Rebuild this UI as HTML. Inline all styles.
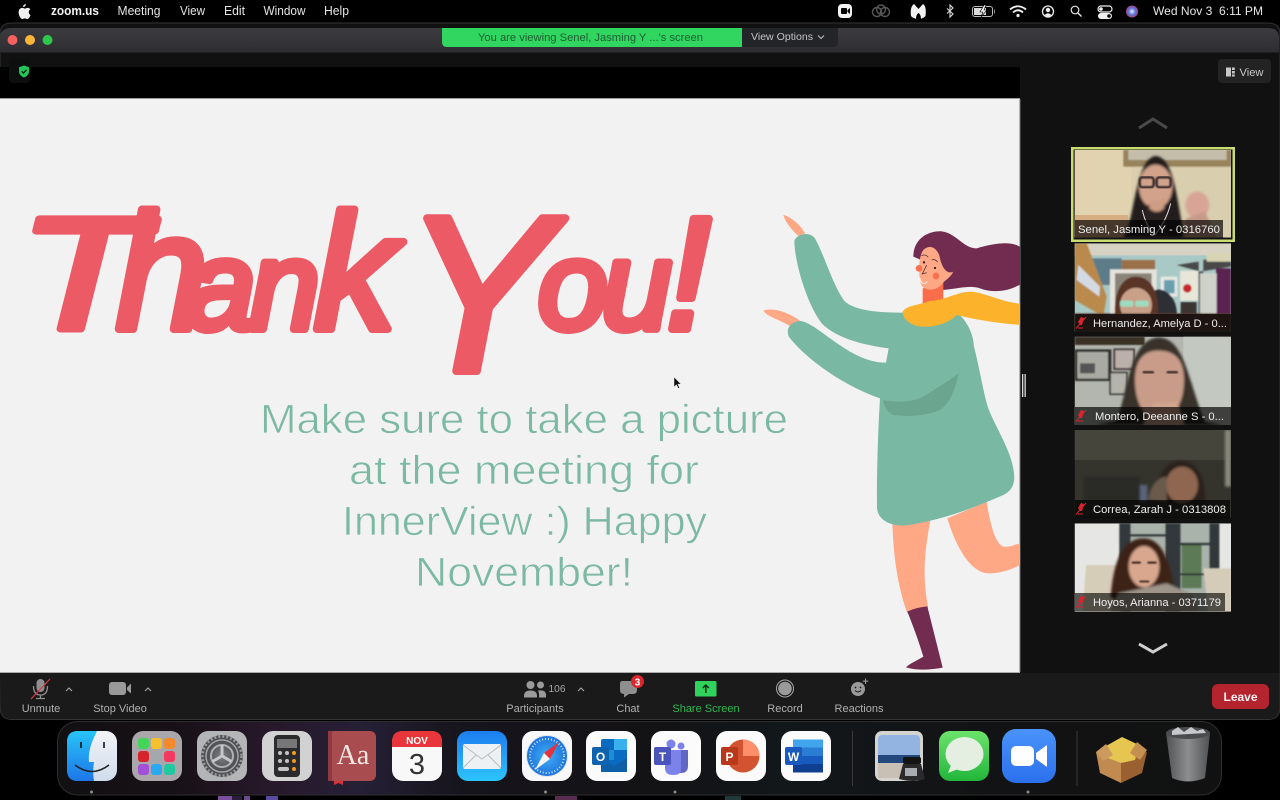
<!DOCTYPE html>
<html><head><meta charset="utf-8"><title>Zoom</title>
<style>
html,body{margin:0;padding:0;width:1280px;height:800px;overflow:hidden;background:#000}
svg{display:block;position:absolute;left:0;top:0}
text{font-family:"Liberation Sans",sans-serif}
.scr{font-style:italic;fill:#ec5a65;stroke:#ec5a65;stroke-linejoin:round;stroke-linecap:round}
</style></head><body>
<svg width="1280" height="800" viewBox="0 0 1280 800" xmlns="http://www.w3.org/2000/svg">
<defs>
<filter id="b1" x="-10%" y="-10%" width="120%" height="120%"><feGaussianBlur stdDeviation="4"/></filter>
<filter id="b2" x="-10%" y="-10%" width="120%" height="120%"><feGaussianBlur stdDeviation="2"/></filter>
<linearGradient id="title" x1="0" y1="0" x2="0" y2="1"><stop offset="0" stop-color="#3c3b3f"/><stop offset="1" stop-color="#2e2d31"/></linearGradient>
<linearGradient id="dockbg" x1="0" x2="1" y1="0" y2="0">
<stop offset="0" stop-color="#111012"/><stop offset=".1" stop-color="#171116"/><stop offset=".18" stop-color="#27182a"/><stop offset=".26" stop-color="#262036"/><stop offset=".34" stop-color="#17151d"/><stop offset=".5" stop-color="#131214"/><stop offset=".62" stop-color="#12171a"/><stop offset=".8" stop-color="#121314"/><stop offset="1" stop-color="#111112"/></linearGradient>
<linearGradient id="finderL" x1="0" y1="0" x2="0" y2="1"><stop offset="0" stop-color="#27c4f8"/><stop offset="1" stop-color="#1d76e8"/></linearGradient>
<linearGradient id="finderR" x1="0" y1="0" x2="0" y2="1"><stop offset="0" stop-color="#f4f4f6"/><stop offset="1" stop-color="#cfdcec"/></linearGradient>
<linearGradient id="mailb" x1="0" y1="0" x2="0" y2="1"><stop offset="0" stop-color="#1d7df0"/><stop offset="1" stop-color="#2cc4fb"/></linearGradient>
<linearGradient id="msg" x1="0" y1="0" x2="0" y2="1"><stop offset="0" stop-color="#6ce36b"/><stop offset="1" stop-color="#22b63c"/></linearGradient>
<linearGradient id="zoomi" x1="0" y1="0" x2="0" y2="1"><stop offset="0" stop-color="#4a93fb"/><stop offset="1" stop-color="#2b70ec"/></linearGradient>
<linearGradient id="trash" x1="0" y1="0" x2="1" y2="0"><stop offset="0" stop-color="#505254"/><stop offset=".5" stop-color="#8c8e90"/><stop offset="1" stop-color="#4e5052"/></linearGradient>
<radialGradient id="siri" cx=".5" cy=".5" r=".5"><stop offset="0" stop-color="#e8f2ff"/><stop offset=".6" stop-color="#5a6fd8"/><stop offset="1" stop-color="#b0467c"/></radialGradient>
<radialGradient id="safari" cx=".5" cy=".5" r=".5"><stop offset="0" stop-color="#3fb0f5"/><stop offset="1" stop-color="#1d72dc"/></radialGradient>
<radialGradient id="gear" cx=".5" cy=".5" r=".5"><stop offset="0" stop-color="#7d7f82"/><stop offset="1" stop-color="#494b4e"/></radialGradient>
<clipPath id="c1"><rect x="44" y="30" width="469" height="263"/></clipPath>
<clipPath id="c2"><rect x="44" y="310" width="469" height="265"/></clipPath>
<clipPath id="c3"><rect x="44" y="590" width="469" height="265"/></clipPath>
<clipPath id="c4"><rect x="44" y="30" width="469" height="263"/></clipPath>
<clipPath id="c5"><rect x="44" y="310" width="469" height="265"/></clipPath>
<clipPath id="slide"><rect x="0" y="99" width="1020" height="573"/></clipPath>
</defs>

<rect width="1280" height="800" fill="#000"/>

<!-- wallpaper bits -->
<rect x="218" y="796" width="14" height="4" fill="#7a4fa0"/><rect x="232" y="796" width="10" height="4" fill="#2a1f3a"/><rect x="244" y="796" width="6" height="4" fill="#6a4a90"/><rect x="266" y="796" width="12" height="4" fill="#5b4aa0"/>
<rect x="555" y="796" width="22" height="4" fill="#5a2c50"/><rect x="725" y="796" width="16" height="4" fill="#22383c"/>

<!-- Window -->
<path d="M0 34 Q0 23 12 23 L1268 23 Q1280 23 1280 34 L1280 707 Q1280 719.500 1268 719.500 L12 719.500 Q0 719.500 0 707Z" fill="#111112" stroke="#333" stroke-width="1"/>
<path d="M0 38 Q0 28 12 28 L1268 28 Q1279 28 1279 38 L1279 52 L0 52Z" fill="url(#title)"/>
<rect x="0" y="52" width="1280" height="1" fill="#1e1e1f"/>
<circle cx="12.500" cy="40" r="5" fill="#f4605c"/><circle cx="30" cy="40" r="5" fill="#fbb63a"/><circle cx="47.500" cy="40" r="5" fill="#2fc74a"/>

<!-- Banner -->
<path d="M442 28 H742 V47 H447 Q442 47 442 42Z" fill="#30d65f"/>
<text x="478" y="41" font-size="11" fill="#1f5c33" textLength="225" lengthAdjust="spacingAndGlyphs">You are viewing Senel, Jasming Y ...'s screen</text>
<path d="M742 28 H838 V42 Q838 47 833 47 H742Z" fill="#242529"/>
<text x="751" y="40" font-size="10" fill="#c4c4c4" textLength="62" lengthAdjust="spacingAndGlyphs">View Options</text>
<path d="M818 35.500 l3 3 l3 -3" fill="none" stroke="#c4c4c4" stroke-width="1"/>

<!-- Menu bar -->
<path d="M25.700 4 C24.200 4.200 23 5.400 23.100 7 C24.600 7 26 5.700 25.700 4Z M28.800 11.800 C28.800 10.400 29.900 9.600 30.400 9.300 C29.600 8.100 28.200 7.900 27.700 7.900 C26.600 7.800 25.500 8.600 24.900 8.600 C24.300 8.600 23.400 7.900 22.400 7.900 C21.100 7.900 19.800 8.700 19.200 9.800 C17.900 12 18.900 15.400 20.100 17.200 C20.700 18.100 21.500 19 22.400 19 C23.300 19 23.700 18.400 24.800 18.400 C25.900 18.400 26.200 19 27.200 19 C28.200 19 28.900 18.100 29.500 17.200 C30.200 16.200 30.500 15.200 30.500 15.100 C30.500 15.100 28.800 14.400 28.800 11.800Z" fill="#f0f0f0"/>
<g fill="#e4e4e4" font-size="12.500">
<text x="51" y="15" font-weight="bold" fill="#f2f2f2" textLength="48" lengthAdjust="spacingAndGlyphs">zoom.us</text>
<text x="117.500" y="15" textLength="43" lengthAdjust="spacingAndGlyphs">Meeting</text>
<text x="180" y="15" textLength="25" lengthAdjust="spacingAndGlyphs">View</text>
<text x="224" y="15" textLength="21" lengthAdjust="spacingAndGlyphs">Edit</text>
<text x="263.500" y="15" textLength="42" lengthAdjust="spacingAndGlyphs">Window</text>
<text x="324" y="15" textLength="25" lengthAdjust="spacingAndGlyphs">Help</text>
<text x="1153" y="15" font-size="12" textLength="110" lengthAdjust="spacingAndGlyphs" xml:space="preserve">Wed Nov 3  6:11 PM</text>
</g>
<!-- status icons -->
<rect x="838" y="4" width="14" height="14" rx="4" fill="#f2f2f2"/><rect x="841" y="8" width="6" height="6" rx="1" fill="#000"/><path d="M847.500 10 l2.500 -2 v6 l-2.500 -2z" fill="#000"/>
<g fill="none" stroke="#555" stroke-width="1.500"><circle cx="877" cy="12" r="4.500"/><circle cx="885" cy="12" r="4.500"/><circle cx="881" cy="9.500" r="4.500"/></g>
<path d="M911 16 C910 9 912 5 914 4 L918.500 9 L923 4 C925 5 926.500 9 925.500 16 C924 18 922 18 921 19 C921 16 920 14 918.500 13 C917 14 916 16 916 19 C914.500 18 912.500 18 911 16Z" fill="#f2f2f2"/>
<path d="M947 8.500 L953 14 L950 17 V5 L953 8 L947 13.500" fill="none" stroke="#dcdcdc" stroke-width="1.100"/>
<rect x="972.500" y="6.500" width="20" height="10" rx="2.500" fill="none" stroke="#bdbdbd"/><rect x="974" y="8" width="12" height="7" fill="#dcdcdc"/><path d="M984 5 l-4 7 h3 l-2 5 l6 -7 h-3 l2 -5z" fill="#f4f4f4" stroke="#000" stroke-width=".6"/><rect x="994" y="9.500" width="1" height="4" fill="#888"/>
<path d="M1010 9.500 Q1018 3 1026 9.500 M1013 12.500 Q1018 8 1023 12.500" fill="none" stroke="#f0f0f0" stroke-width="1.800"/><circle cx="1018" cy="15.500" r="1.600" fill="#f0f0f0"/>
<circle cx="1048" cy="11.500" r="5.500" fill="none" stroke="#eee" stroke-width="1.300"/><circle cx="1048" cy="10" r="2.200" fill="#eee"/><path d="M1044.500 15 Q1048 11.500 1051.500 15 L1048 17z" fill="#eee"/>
<circle cx="1075" cy="10" r="3.800" fill="none" stroke="#e4e4e4" stroke-width="1.200"/><path d="M1078 13 L1081.500 16.500" stroke="#e4e4e4" stroke-width="1.400"/>
<rect x="1098" y="6" width="14" height="6" rx="3" fill="none" stroke="#eee" stroke-width="1.200"/><circle cx="1101" cy="9" r="1.800" fill="#eee"/><rect x="1098" y="13" width="14" height="6" rx="3" fill="#eee"/><circle cx="1109" cy="16" r="1.800" fill="#000"/>
<circle cx="1132" cy="11.500" r="6" fill="url(#siri)"/>

<!-- Top black band & slide -->
<rect x="0" y="67" width="1020" height="32" fill="#000"/>
<rect x="9" y="59" width="21" height="24" rx="4" fill="#0c0f0d"/>
<path d="M24 65.500 L29 67.300 V71.500 C29 74.500 26.500 76.500 24 77.500 C21.500 76.500 19 74.500 19 71.500 V67.300Z" fill="#22c55a"/><path d="M21.800 71.300 l1.700 1.800 l3 -3.300" fill="none" stroke="#0a1a10" stroke-width="1.300"/>
<rect x="0" y="98" width="1020" height="1.500" fill="#9a9a9a"/>
<rect x="0" y="99" width="1020" height="573" fill="#f3f2f2"/>
<rect x="1019.500" y="99" width="1" height="573" fill="#777"/>

<g clip-path="url(#slide)">
<!-- Title: real text with rounded monoline stroke, per-glyph placement -->
<text class="scr" transform="translate(18 329) scale(1.3 1)" font-size="160" stroke-width="7">T</text>
<text class="scr" y="329" stroke-width="8" font-size="125"><tspan x="116" font-size="165">h</tspan><tspan x="186">a</tspan><tspan x="250">n</tspan><tspan x="314" font-size="165">k</tspan></text>
<text class="scr" x="404" y="371" font-size="222" stroke-width="8">Y</text>
<text class="scr" y="329" font-size="125" stroke-width="8"><tspan x="538">o</tspan><tspan x="602">u</tspan></text>
<text class="scr" x="666" y="329" font-size="160" stroke-width="8">!</text>
<!-- Body -->
<g fill="#7cb9a3" stroke="#f3f2f2" stroke-width=".7" font-size="41">
<text x="260" y="433" textLength="528" lengthAdjust="spacingAndGlyphs">Make sure to take a picture</text>
<text x="349" y="484" textLength="350" lengthAdjust="spacingAndGlyphs">at the meeting for</text>
<text x="342" y="535" textLength="365" lengthAdjust="spacingAndGlyphs">InnerView :) Happy</text>
<text x="415" y="586" textLength="218" lengthAdjust="spacingAndGlyphs">November!</text>
</g>
<!-- Woman -->
<g transform="translate(750 200) scale(.33333)">
<path d="M100 45 C125 50 155 80 165 100 L145 108 C125 90 105 65 100 45Z" fill="#fea886"/>
<path d="M40 332 C70 320 120 340 150 362 L120 378 C90 360 50 350 40 332Z" fill="#fea886"/>
<path d="M592 955 L710 905 C720 970 735 1030 760 1040 C780 1042 795 1035 812 1028 L812 1095 C770 1115 730 1125 700 1118 C650 1100 615 1030 592 955Z" fill="#fea886"/>
<path d="M427 965 L542 955 C525 1050 515 1120 535 1225 L472 1240 C440 1150 430 1060 427 965Z" fill="#fea886"/>
<path d="M472 1235 C490 1225 510 1222 532 1219 L578 1403 C540 1410 500 1412 468 1402 C480 1390 505 1380 520 1370 C505 1320 490 1280 472 1235Z" fill="#722c50"/>
<path d="M133 125 C135 105 175 90 195 115 C225 170 250 260 285 305 C320 335 400 338 460 338 L620 338 C650 360 670 400 672 440 C690 510 700 580 715 625 C740 690 790 760 793 830 C793 860 780 875 760 885 C680 920 580 960 470 976 C430 980 385 965 381 925 C380 800 385 680 390 595 C300 565 180 490 118 412 C105 390 120 365 150 363 C200 365 300 490 408 488 L416 445 C340 435 260 415 215 370 C170 310 135 190 133 125Z" fill="#79b8a2"/>
<path d="M400 600 C450 610 490 605 520 590 C560 565 600 540 626 520 C615 570 600 610 570 630 C520 650 470 650 430 645 C410 635 402 620 400 600Z" fill="#6ba48f"/>
<path d="M490 170 C490 120 530 92 575 94 C620 100 640 145 680 145 C730 130 790 120 815 145 L815 250 C780 275 730 280 690 265 C660 255 630 265 580 270 L560 200Z" fill="#722c50"/>
<path d="M518 265 L580 245 L580 310 L518 310Z" fill="#f96d4a"/>
<path d="M520 150 C540 130 565 145 570 175 C575 200 590 225 610 215 C600 235 585 240 578 250 C560 275 520 275 512 250 C505 220 505 170 520 150Z" fill="#fea886"/>
<path d="M458 335 C470 315 510 315 540 303 C590 300 620 275 665 275 C710 280 750 305 815 312 L815 375 C750 370 690 362 620 345 C590 375 540 385 500 378 C475 370 458 355 458 335Z" fill="#fdb22b"/>
<circle cx="507" cy="205" r="10" fill="#f9714e"/><circle cx="558" cy="228" r="10" fill="#f9714e"/>
<circle cx="522" cy="187" r="3.500" fill="#3c2030"/><circle cx="555" cy="204" r="3.500" fill="#3c2030"/>
<path d="M514 168 Q525 160 535 172 M545 180 Q555 176 563 186 M530 195 L517 222 L530 218" fill="none" stroke="#3c2030" stroke-width="2"/>
<path d="M510 235 Q515 260 532 245" fill="none" stroke="#fff" stroke-width="2.500"/>
</g>
</g>
<!-- cursor -->
<path d="M674 377 v10 l2.500 -2.300 l1.800 3.800 l1.300 -.6 l-1.700 -3.700 h3.100z" fill="#111" stroke="#eee" stroke-width=".5"/>

<!-- Handle -->
<rect x="1022" y="374" width="1.300" height="23" fill="#dcdcdc"/><rect x="1024.500" y="374" width="1.300" height="23" fill="#dcdcdc"/>

<!-- View btn -->
<rect x="1218" y="59" width="53" height="24" rx="4" fill="#232324"/>
<rect x="1226" y="67.500" width="5" height="9" fill="#c8c8c8"/><rect x="1232" y="67.500" width="2.800" height="2.500" fill="#c8c8c8"/><rect x="1232" y="71" width="2.800" height="2.500" fill="#c8c8c8"/><rect x="1232" y="74.500" width="2.800" height="2" fill="#c8c8c8"/>
<text x="1239.500" y="76" font-size="11" fill="#c8c8c8" textLength="24" lengthAdjust="spacingAndGlyphs">View</text>

<!-- Chevrons -->
<path d="M1139 128 L1153 119 L1167 128" fill="none" stroke="#4a4a4a" stroke-width="3"/>
<path d="M1139 644 L1153 652 L1167 644" fill="none" stroke="#cfcfcf" stroke-width="3"/>

<!-- Thumb 1 -->
<rect x="1071" y="147" width="164" height="95" fill="#c9dc72"/>
<rect x="1073.500" y="149.500" width="159" height="90" fill="#131313"/>
<g transform="translate(1060 140) scale(.33333)">
<g clip-path="url(#c1)">
<rect x="44" y="30" width="469" height="263" fill="#d9ceae"/>
<rect x="44" y="30" width="170" height="263" fill="#e2d3b0"/>
<rect x="44" y="225" width="160" height="70" fill="#d7ae84"/>
<g filter="url(#b2)">
<rect x="190" y="30" width="323" height="50" fill="#97835c"/>
<rect x="205" y="30" width="295" height="30" fill="#c3bdaa"/>
</g>
<g filter="url(#b1)">
<path d="M190 293 C225 240 225 60 285 48 C345 48 350 190 375 293Z" fill="#241b1c"/>
<ellipse cx="287" cy="140" rx="50" ry="66" fill="#d3a28a"/>
<path d="M258 195 L315 195 L330 293 L250 293Z" fill="#2a2220"/>
<path d="M270 180 Q290 190 315 172 L312 205 Q290 225 268 205Z" fill="#cf9c84"/>
<ellipse cx="412" cy="195" rx="36" ry="40" fill="#d8a496"/>
<path d="M378 235 L435 215 L470 293 L370 293Z" fill="#c69a8a"/>
</g>
<g fill="none" stroke="#33262a" stroke-width="7" filter="url(#b2)"><rect x="239" y="112" width="42" height="30" rx="8"/><rect x="290" y="112" width="42" height="30" rx="8"/></g>
<path d="M247 210 Q258 260 285 285 Q320 240 332 190" fill="none" stroke="#ddd" stroke-width="3"/>
</g></g>
<rect x="1075" y="220" width="148" height="18" fill="#000" fill-opacity=".68"/>
<text x="1078" y="233" font-size="11" fill="#eee" textLength="142" lengthAdjust="spacingAndGlyphs">Senel, Jasming Y - 0316760</text>

<!-- Thumb 2 -->
<g transform="translate(1060 140) scale(.33333)">
<g clip-path="url(#c2)">
<rect x="44" y="310" width="469" height="265" fill="#a9c9c6"/>
<rect x="44" y="310" width="469" height="36" fill="#d6d2c4"/>
<g filter="url(#b2)">
<rect x="85" y="355" width="100" height="80" fill="#5d7c8a"/>
<path d="M44 310 L80 310 L140 470 L130 530 L44 480Z" fill="#b98a4c"/>
<path d="M55 375 L120 440 L118 470 L50 420Z" fill="#d4dae4"/>
<rect x="185" y="360" width="100" height="30" fill="#9a7048"/>
<rect x="150" y="388" width="140" height="140" fill="#e6e3dc"/>
<rect x="165" y="400" width="110" height="120" fill="#8a8378"/>
<rect x="302" y="410" width="50" height="60" fill="#e8e8e2"/><rect x="312" y="420" width="32" height="40" fill="#68a0b0"/>
<rect x="360" y="392" width="54" height="90" fill="#e8e6d8"/><circle cx="382" cy="445" r="13" fill="#c8282c"/>
<rect x="362" y="486" width="48" height="40" fill="#3a3632"/>
<path d="M350 375 L416 365 L416 520 L430 520 L430 360 L513 345 V380 L420 395Z" fill="#4a4a48"/>
<rect x="440" y="340" width="73" height="25" fill="#d8d4b4"/>
<rect x="468" y="385" width="45" height="145" fill="#5a2050"/>
<rect x="420" y="400" width="50" height="120" fill="#cfd2c8"/>
<path d="M285 450 C320 440 355 480 350 530 L285 530Z" fill="#2e2e34"/>
<path d="M165 530 C160 450 190 408 230 410 C280 412 300 470 292 530Z" fill="#5a3628"/>
<ellipse cx="228" cy="495" rx="48" ry="52" fill="#c8a088"/>
<rect x="180" y="482" width="40" height="18" rx="6" fill="#9edcc0"/><rect x="226" y="482" width="40" height="18" rx="6" fill="#9edcc0"/>
<rect x="44" y="520" width="469" height="55" fill="#5a3a30"/>
</g>
</g></g>
<rect x="1075" y="314" width="156" height="18" fill="#000" fill-opacity=".68"/>
<text x="1093" y="327" font-size="11" fill="#eee" textLength="134" lengthAdjust="spacingAndGlyphs">Hernandez, Amelya D - 0...</text>

<!-- Thumb 3 -->
<g transform="translate(1060 140) scale(.33333)">
<g clip-path="url(#c3)">
<rect x="44" y="590" width="469" height="265" fill="#b2b6ae"/>
<rect x="370" y="590" width="143" height="265" fill="#c3c8c0"/>
<g filter="url(#b2)">
<rect x="44" y="590" width="210" height="25" fill="#3a3028"/>
<rect x="44" y="628" width="110" height="95" fill="#33322e"/><rect x="52" y="636" width="92" height="80" fill="#a9aaa4"/><rect x="60" y="670" width="45" height="30" fill="#555"/>
<rect x="160" y="625" width="65" height="65" fill="#4a403c"/><rect x="166" y="631" width="53" height="53" fill="#bbb0aa"/>
<rect x="148" y="695" width="55" height="70" fill="#3a3a36"/><rect x="153" y="700" width="45" height="60" fill="#b4b4ac"/>
</g>
<g filter="url(#b1)">
<path d="M165 855 C205 760 205 600 295 592 C380 595 385 740 440 855Z" fill="#37302c"/>
<path d="M225 720 C225 650 260 630 300 632 C345 634 372 660 372 720 C372 790 340 840 300 840 C255 840 225 790 225 720Z" fill="#c89c88"/>
<path d="M250 855 L280 790 L350 785 L375 855Z" fill="#d0a48e"/>
<path d="M110 855 L230 830 L250 855Z M370 835 L490 855 L370 855Z" fill="#2c2a28"/>
</g>
<g filter="url(#b2)" fill="#3a2a26"><rect x="248" y="693" width="34" height="7" rx="3"/><rect x="320" y="693" width="34" height="7" rx="3"/></g>
</g></g>
<rect x="1075" y="407" width="156" height="18" fill="#000" fill-opacity=".68"/>
<text x="1095" y="420" font-size="11" fill="#eee" textLength="129" lengthAdjust="spacingAndGlyphs">Montero, Deeanne S - 0...</text>

<!-- Thumb 4 -->
<g transform="translate(1060 420) scale(.33333)">
<g clip-path="url(#c4)">
<rect x="44" y="30" width="469" height="263" fill="#34342d"/>
<rect x="44" y="30" width="469" height="90" fill="#45453b"/>
<g filter="url(#b1)">
<rect x="495" y="30" width="18" height="170" fill="#88887a"/>
<rect x="70" y="170" width="170" height="80" fill="#2c2c28"/>
<rect x="240" y="195" width="22" height="50" fill="#5a6478"/>
<path d="M280 250 C290 150 330 120 365 122 C410 125 440 170 435 250Z" fill="#2b211d"/>
<ellipse cx="366" cy="195" rx="48" ry="55" fill="#8f6650"/>
<path d="M265 240 C270 190 300 170 320 170 L320 245Z" fill="#6a5a4c"/>
</g>
</g></g>
<rect x="1075" y="500" width="155" height="18" fill="#000" fill-opacity=".68"/>
<text x="1093" y="513" font-size="11" fill="#eee" textLength="133" lengthAdjust="spacingAndGlyphs">Correa, Zarah J - 0313808</text>

<!-- Thumb 5 -->
<g transform="translate(1060 420) scale(.33333)">
<g clip-path="url(#c5)">
<rect x="44" y="310" width="469" height="265" fill="#e6e6e4"/>
<g filter="url(#b2)">
<rect x="178" y="310" width="300" height="265" fill="#a9b3ab"/>
<rect x="365" y="375" width="60" height="130" fill="#5c7a54"/>
<rect x="178" y="310" width="34" height="265" fill="#33383a"/>
<rect x="316" y="310" width="46" height="265" fill="#33383a"/>
<rect x="448" y="310" width="30" height="265" fill="#33383a"/>
<rect x="212" y="342" width="104" height="8" fill="#33383a"/><rect x="362" y="368" width="90" height="8" fill="#33383a"/><rect x="362" y="460" width="90" height="6" fill="#33383a"/>
<path d="M78 435 L180 435 L180 575 L68 575Z" fill="#d5cdb8"/>
<path d="M430 445 L513 445 L513 575 L445 575Z" fill="#d4ccb8"/>
</g>
<g filter="url(#b1)">
<path d="M152 530 C160 420 190 355 250 355 C310 355 330 430 345 520 L320 545 L170 545Z" fill="#3d2218"/>
<ellipse cx="252" cy="440" rx="46" ry="62" fill="#d8a78e"/>
<path d="M150 575 L175 520 L320 490 L395 520 L420 575Z" fill="#9e948a"/>
</g>
<g filter="url(#b2)" fill="#3a2018"><rect x="215" y="425" width="28" height="6" rx="3"/><rect x="262" y="425" width="28" height="6" rx="3"/><rect x="238" y="482" width="30" height="5" rx="2"/></g>
</g></g>
<rect x="1075" y="593" width="150" height="18" fill="#000" fill-opacity=".62"/>
<text x="1093" y="606" font-size="11" fill="#eee" textLength="128" lengthAdjust="spacingAndGlyphs">Hoyos, Arianna - 0371179</text>

<!-- Red mic icons -->
<g fill="none" stroke="#d8242c">
<g transform="translate(1081 323)"><path d="M-3 -1 L0 -6 L3 -5 L1 2 L-1 2z" fill="#d8242c" stroke="none"/><path d="M-5 5.500 L5 -6" stroke-width="1"/><path d="M-3 5 H2" stroke-width="1"/></g>
<g transform="translate(1081 416)"><path d="M-3 -1 L0 -6 L3 -5 L1 2 L-1 2z" fill="#d8242c" stroke="none"/><path d="M-5 5.500 L5 -6" stroke-width="1"/><path d="M-3 5 H2" stroke-width="1"/></g>
<g transform="translate(1081 509)"><path d="M-3 -1 L0 -6 L3 -5 L1 2 L-1 2z" fill="#d8242c" stroke="none"/><path d="M-5 5.500 L5 -6" stroke-width="1"/><path d="M-3 5 H2" stroke-width="1"/></g>
<g transform="translate(1081 602)"><path d="M-3 -1 L0 -6 L3 -5 L1 2 L-1 2z" fill="#d8242c" stroke="none"/><path d="M-5 5.500 L5 -6" stroke-width="1"/><path d="M-3 5 H2" stroke-width="1"/></g>
</g>

<!-- Toolbar -->
<rect x="0" y="672" width="1020" height="1.500" fill="#aaa"/>
<path d="M0 673 H1279.500 V707 Q1279.500 719 1268 719 H12 Q0.500 719 0.500 707Z" fill="#1a1a1b"/>
<!-- Unmute -->
<rect x="36.500" y="679" width="8" height="13" rx="4" fill="#8f8f8f"/>
<path d="M33.500 686 Q33.500 695 40.500 695 Q47.500 695 47.500 686 M40.500 695 V698 M36 698.500 H45" fill="none" stroke="#8f8f8f" stroke-width="1.300"/>
<path d="M31 699 L50 679" stroke="#dd3a44" stroke-width="1.200"/>
<path d="M66 691 l3 -3 l3 3" fill="none" stroke="#a8a8a8" stroke-width="1.100"/>
<!-- Video -->
<rect x="109" y="682" width="17" height="13" rx="3" fill="#9a9a9a"/><path d="M127 687.500 L131 683.500 V693.500 L127 690Z" fill="#9a9a9a"/>
<path d="M145 691 l3 -3 l3 3" fill="none" stroke="#a8a8a8" stroke-width="1.100"/>
<!-- Participants -->
<circle cx="530.500" cy="685" r="4" fill="#9a9a9a"/><path d="M524 696 Q524 690.500 530.500 690.500 Q537 690.500 537 696 L537 697.500 H524Z" fill="#9a9a9a"/>
<circle cx="540.500" cy="685" r="3.500" fill="#9a9a9a"/><path d="M538 690.500 Q546 689.500 546 695 L546 697.500 H539 Q539.500 693 538 690.500Z" fill="#9a9a9a"/>
<text x="548.500" y="692" font-size="10.500" fill="#a8a8a8" textLength="17" lengthAdjust="spacingAndGlyphs">106</text>
<path d="M578 691 l3 -3 l3 3" fill="none" stroke="#a8a8a8" stroke-width="1.100"/>
<!-- Chat -->
<path d="M622 681 H633 Q637 681 637 685 V690 Q637 694 633 694 H629 L624 697.500 V694 Q620 694 620 690 V684 Q620 681 622 681Z" fill="#8f8f8f"/>
<circle cx="637.500" cy="681.500" r="6.500" fill="#d8272f"/><text x="637.500" y="685.500" font-size="10" font-weight="bold" fill="#fff" text-anchor="middle">3</text>
<!-- Share -->
<rect x="695" y="681" width="21.500" height="15.500" rx="1.500" fill="#2fd25c"/><path d="M705.800 693 V685.500 M702.800 688 L705.800 685 L708.800 688" fill="none" stroke="#0a2a14" stroke-width="1.500"/>
<!-- Record -->
<circle cx="785" cy="688.500" r="8.500" fill="none" stroke="#a8a8a8" stroke-width="1"/><circle cx="785" cy="688.500" r="6.800" fill="#9a9a9a"/>
<!-- Reactions -->
<circle cx="858" cy="689" r="7" fill="#9a9a9a"/><circle cx="855.500" cy="687.500" r=".9" fill="#1a1a1b"/><circle cx="860.500" cy="687.500" r=".9" fill="#1a1a1b"/><path d="M855 690.500 Q858 693.500 861 690.500" fill="none" stroke="#1a1a1b" stroke-width="1"/>
<path d="M865.500 678.500 V684 M862.800 681.200 H868.200" stroke="#9a9a9a" stroke-width="1.100"/>
<g font-size="11" fill="#b0b0b0" text-anchor="middle">
<text x="41" y="712">Unmute</text>
<text x="120" y="712">Stop Video</text>
<text x="535" y="712">Participants</text>
<text x="628" y="712">Chat</text>
<text x="706" y="712" fill="#2fb84f">Share Screen</text>
<text x="785" y="712">Record</text>
<text x="859" y="712">Reactions</text>
</g>
<rect x="1212" y="684" width="57" height="25" rx="6" fill="#b3242e"/>
<text x="1240.500" y="701" font-size="12" font-weight="bold" fill="#f6f0f0" text-anchor="middle">Leave</text>

<!-- Dock -->
<rect x="57.500" y="721.500" width="1164" height="73.500" rx="20" fill="url(#dockbg)" stroke="#2e2e30"/>
<rect x="852" y="731" width="1" height="55" fill="#3a3a3c"/><rect x="1076.500" y="731" width="1" height="55" fill="#3a3a3c"/>
<g fill="#8a8a8a"><circle cx="91.500" cy="792" r="1.500"/><circle cx="545.500" cy="792" r="1.500"/><circle cx="675" cy="792" r="1.500"/><circle cx="1028" cy="792" r="1.500"/></g>

<!-- Finder -->
<rect x="67" y="731" width="50" height="50" rx="11" fill="url(#finderR)"/>
<path d="M78 731 H97 C91 743 88 752 89 762 H94 C93 768 93 775 94 781 H78 Q67 781 67 770 V742 Q67 731 78 731Z" fill="url(#finderL)"/>
<rect x="80" y="742" width="2" height="6" fill="#133"/><rect x="103" y="742" width="2" height="6" fill="#345"/>
<path d="M75 765 Q92 778 109 765" fill="none" stroke="#222" stroke-width="1.500"/>
<!-- Launchpad -->
<rect x="132" y="731" width="50" height="50" rx="11" fill="#aaa7ab"/>
<g><rect x="138" y="738" width="11" height="11" rx="3" fill="#44d45a"/><rect x="151" y="738" width="11" height="11" rx="3" fill="#f6c02f"/><rect x="164" y="738" width="11" height="11" rx="3" fill="#f48a2b"/>
<rect x="138" y="751" width="11" height="11" rx="3" fill="#d8252c"/><rect x="151" y="751" width="11" height="11" rx="3" fill="#a4a8ac"/><rect x="164" y="751" width="11" height="11" rx="3" fill="#f23a60"/>
<rect x="138" y="764" width="11" height="11" rx="3" fill="#a44fd8"/><rect x="151" y="764" width="11" height="11" rx="3" fill="#2aa8f0"/><rect x="164" y="764" width="11" height="11" rx="3" fill="#22c8a0"/></g>
<!-- System Prefs -->
<rect x="197" y="731" width="50" height="50" rx="11" fill="#b3b5b6"/>
<circle cx="222" cy="756" r="21" fill="#4e5053"/><circle cx="222" cy="756" r="19.500" fill="none" stroke="#9a9c9e" stroke-width="2.500" stroke-dasharray="2 2"/><circle cx="222" cy="756" r="16" fill="url(#gear)" stroke="#a4a6a8" stroke-width="1.500"/>
<circle cx="222" cy="756" r="11" fill="none" stroke="#aeb0b2" stroke-width="2"/><path d="M222 756 V745 M222 756 L231.500 761.500 M222 756 L212.500 761.500" stroke="#c4c6c8" stroke-width="3"/>
<!-- Calculator -->
<rect x="262" y="731" width="50" height="50" rx="11" fill="#d2d2d2"/>
<rect x="274" y="735" width="26" height="42" rx="4" fill="#2b2b2d"/><rect x="277" y="739" width="20" height="9" fill="#777"/>
<g fill="#c4c4c4"><circle cx="280" cy="753" r="2"/><circle cx="287" cy="753" r="2"/><circle cx="280" cy="761" r="2"/><circle cx="287" cy="761" r="2"/></g><g fill="#f09a24"><circle cx="294" cy="753" r="2"/><circle cx="294" cy="761" r="2"/><circle cx="294" cy="769" r="2"/></g><rect x="278" y="767" width="11" height="4" rx="2" fill="#c4c4c4"/>
<!-- Dictionary -->
<rect x="328" y="731" width="48" height="50" rx="6" fill="#a84c50"/><rect x="328" y="731" width="4" height="50" fill="#8e3a3e"/>
<path d="M334 781 H343 V785 L338.500 783 L334 785Z" fill="#d8323c"/>
<text x="353" y="764" font-size="28" fill="#f3e6e0" text-anchor="middle" style="font-family:'Liberation Serif',serif">Aa</text>
<!-- Calendar -->
<rect x="392" y="731" width="50" height="50" rx="11" fill="#f8f8f8"/>
<path d="M392 747 V742 Q392 731 403 731 H431 Q442 731 442 742 V747Z" fill="#e8363a"/>
<text x="417" y="744" font-size="10" font-weight="bold" fill="#fff" text-anchor="middle">NOV</text>
<text x="417" y="774" font-size="29" fill="#333" text-anchor="middle">3</text>
<!-- Mail -->
<rect x="457" y="731" width="50" height="50" rx="11" fill="url(#mailb)"/>
<rect x="463" y="744" width="38" height="25" rx="2" fill="#eef1f4"/><path d="M463 745 L482 759 L501 745 M463 768 L476 755 M501 768 L488 755" fill="none" stroke="#b8bcc4" stroke-width="1"/>
<!-- Safari -->
<rect x="522" y="731" width="50" height="50" rx="11" fill="#f8f8f8"/>
<circle cx="547" cy="756" r="20.500" fill="url(#safari)" stroke="#dfe6ee"/><circle cx="547" cy="756" r="17" fill="none" stroke="#cfe6fa" stroke-width="2" stroke-dasharray="1 2"/>
<path d="M559 742 L550 759 L544 753Z" fill="#e8323a"/><path d="M535 770 L544 753 L550 759Z" fill="#f4f4f4"/>
<!-- Outlook -->
<rect x="586" y="731" width="50" height="50" rx="11" fill="#fbfbfb"/>
<rect x="601" y="739" width="26" height="32" rx="2" fill="#0a6cc0"/><rect x="614" y="739" width="13" height="11" fill="#38b0ee"/><rect x="601" y="750" width="13" height="10" fill="#1a90d8"/><path d="M601 758 L614 766 L627 758 V772 H601Z" fill="#0f5fa8"/>
<rect x="592" y="747" width="17" height="18" rx="2" fill="#0f62ad"/><text x="600.500" y="761" font-size="12" font-weight="bold" fill="#fff" text-anchor="middle">O</text>
<!-- Teams -->
<rect x="651" y="731" width="50" height="50" rx="11" fill="#fbfbfb"/>
<circle cx="671" cy="744" r="4.500" fill="#7b83eb"/><circle cx="681" cy="746" r="3.500" fill="#7b83eb"/>
<path d="M676 750 H688 V766 Q688 773 681 773 Q676 773 676 768Z" fill="#6167c2"/><path d="M665 750 H681 V770 Q681 775 673 775 Q665 775 665 768Z" fill="#7b83eb"/>
<rect x="654" y="747" width="17" height="18" rx="2" fill="#4b53bc"/><text x="662.500" y="761" font-size="12" font-weight="bold" fill="#fff" text-anchor="middle">T</text>
<!-- PowerPoint -->
<rect x="716" y="731" width="50" height="50" rx="11" fill="#fbfbfb"/>
<circle cx="743" cy="756" r="16.500" fill="#d35230"/><path d="M743 739.500 A16.500 16.500 0 0 1 759.500 756 H743Z" fill="#ff8f6b"/>
<rect x="721" y="747" width="17" height="18" rx="2" fill="#b7381a"/><text x="729.500" y="761" font-size="12" font-weight="bold" fill="#fff" text-anchor="middle">P</text>
<!-- Word -->
<rect x="781" y="731" width="50" height="50" rx="11" fill="#fbfbfb"/>
<rect x="793" y="739.500" width="30" height="33" rx="2" fill="#2b7cd3"/><rect x="793" y="739.500" width="30" height="8" fill="#41a5ee"/><rect x="793" y="756" width="30" height="8" fill="#185abd"/><rect x="793" y="764" width="30" height="8.500" fill="#103f91"/>
<rect x="785" y="747" width="17" height="18" rx="2" fill="#185abd"/><text x="793.500" y="761" font-size="12" font-weight="bold" fill="#fff" text-anchor="middle">W</text>
<!-- Preview -->
<rect x="875" y="731" width="48" height="50" rx="7" fill="#d6d4d0"/><rect x="878" y="735" width="42" height="43" rx="4" fill="#93b4e0"/>
<rect x="878" y="755" width="42" height="8" fill="#22487c"/><rect x="878" y="763" width="42" height="15" fill="#c8c0b4"/>
<rect x="903" y="757" width="18" height="7" rx="2" fill="#141414"/>
<path d="M903 764 H921 L925 779 Q914 783 899 779Z" fill="#2a2a2c"/>
<rect x="905" y="768" width="12" height="8" fill="#a8acb0"/>
<!-- Messages -->
<rect x="939" y="731" width="50" height="50" rx="11" fill="url(#msg)"/>
<ellipse cx="964.500" cy="754" rx="19" ry="17" fill="#e4efe2"/><path d="M951 765 L948 773 L958 769Z" fill="#e4efe2"/>
<!-- Zoom -->
<rect x="1002" y="729" width="54" height="54" rx="14" fill="url(#zoomi)"/>
<rect x="1011" y="746" width="23" height="20" rx="5" fill="#fff"/><path d="M1036 753 L1047 745 V767 L1036 759Z" fill="#fff"/>
<!-- Package -->
<path d="M1096 752 L1121 762 V783 L1100 773Z" fill="#c08a50"/><path d="M1147 752 L1121 762 V783 L1142 773Z" fill="#9a6030"/>
<path d="M1106 746 L1122 737 L1139 745 L1135 760 L1121 763 L1108 758Z" fill="#e6c650"/>
<path d="M1096 752 L1106 744 L1113 755 L1103 761Z" fill="#cb9a5e"/><path d="M1147 750 L1137 742 L1130 753 L1140 760Z" fill="#c49050"/>
<!-- Trash -->
<path d="M1166 733 H1210 L1205 778 Q1188 785 1172 778Z" fill="url(#trash)"/>
<ellipse cx="1188" cy="733" rx="22" ry="6" fill="#4a4c4e"/>
<path d="M1172 731 l6 -4 l6 5 l7 -5 l6 4 l6 -2 l3 4 l-34 2z" fill="#c8c8cc"/>
</svg>
</body></html>
